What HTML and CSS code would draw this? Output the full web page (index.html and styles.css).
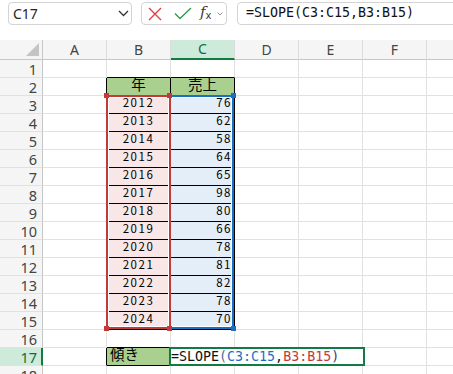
FILE: index.html
```html
<!DOCTYPE html>
<html lang="ja">
<head>
    <meta charset="UTF-8">
    <title>SLOPE</title>
    <link rel="stylesheet" href="styles.css">
</head>
<body>
    <div class="topbar">
        <div class="namebox">
            <span>C17</span>
            <svg class="chev" width="11" height="7" viewBox="0 0 11 7"><polyline points="1,1 5.5,5.5 10,1" fill="none" stroke="#333" stroke-width="1.3"/></svg>
        </div>
        <div class="fxbox">
            <svg class="cancel" width="14" height="14" viewBox="0 0 14 14"><path d="M1 1 L13 13 M13 1 L1 13" stroke="#e0393e" stroke-width="1.3" fill="none"/></svg>
            <svg class="enter" width="18" height="13" viewBox="0 0 18 13"><polyline points="1,6.5 6,11.5 17,1" fill="none" stroke="#2b9a48" stroke-width="1.3"/></svg>
            <span class="fx">f<sub>x</sub></span>
            <svg class="chev-sm" width="6" height="4" viewBox="0 0 6 4"><polyline points="0.5,0.5 3,3 5.5,0.5" fill="none" stroke="#999" stroke-width="1"/></svg>
        </div>
        <div class="formula">=SLOPE(C3:C15,B3:B15)</div>
    </div>

    <div class="sheet-wrap">
        <div class="sheet">
            <div class="c hd corner"><svg width="14" height="14" viewBox="0 0 14 14"><polygon points="13,0 13,13 0,13" fill="#c4c4c4"/></svg></div>
            <div class="c hd">A</div><div class="c hd">B</div><div class="c hd sel">C</div><div class="c hd">D</div><div class="c hd">E</div><div class="c hd">F</div><div class="c hd"></div>

            <div class="c rh">1</div><div class="c"></div><div class="c bb"></div><div class="c bb"></div><div class="c"></div><div class="c"></div><div class="c"></div><div class="c"></div>
            <div class="c rh">2</div><div class="c br"></div><div class="c g bk ctr jp">年</div><div class="c g bk ctr jp">売上</div><div class="c"></div><div class="c"></div><div class="c"></div><div class="c"></div>
            <div class="c rh">3</div><div class="c br"></div><div class="c pk bk ctr">2012</div><div class="c bl bk num">76</div><div class="c"></div><div class="c"></div><div class="c"></div><div class="c"></div>
            <div class="c rh">4</div><div class="c br"></div><div class="c pk bk ctr">2013</div><div class="c bl bk num">62</div><div class="c"></div><div class="c"></div><div class="c"></div><div class="c"></div>
            <div class="c rh">5</div><div class="c br"></div><div class="c pk bk ctr">2014</div><div class="c bl bk num">58</div><div class="c"></div><div class="c"></div><div class="c"></div><div class="c"></div>
            <div class="c rh">6</div><div class="c br"></div><div class="c pk bk ctr">2015</div><div class="c bl bk num">64</div><div class="c"></div><div class="c"></div><div class="c"></div><div class="c"></div>
            <div class="c rh">7</div><div class="c br"></div><div class="c pk bk ctr">2016</div><div class="c bl bk num">65</div><div class="c"></div><div class="c"></div><div class="c"></div><div class="c"></div>
            <div class="c rh">8</div><div class="c br"></div><div class="c pk bk ctr">2017</div><div class="c bl bk num">98</div><div class="c"></div><div class="c"></div><div class="c"></div><div class="c"></div>
            <div class="c rh">9</div><div class="c br"></div><div class="c pk bk ctr">2018</div><div class="c bl bk num">80</div><div class="c"></div><div class="c"></div><div class="c"></div><div class="c"></div>
            <div class="c rh">10</div><div class="c br"></div><div class="c pk bk ctr">2019</div><div class="c bl bk num">66</div><div class="c"></div><div class="c"></div><div class="c"></div><div class="c"></div>
            <div class="c rh">11</div><div class="c br"></div><div class="c pk bk ctr">2020</div><div class="c bl bk num">78</div><div class="c"></div><div class="c"></div><div class="c"></div><div class="c"></div>
            <div class="c rh">12</div><div class="c br"></div><div class="c pk bk ctr">2021</div><div class="c bl bk num">81</div><div class="c"></div><div class="c"></div><div class="c"></div><div class="c"></div>
            <div class="c rh">13</div><div class="c br"></div><div class="c pk bk ctr">2022</div><div class="c bl bk num">82</div><div class="c"></div><div class="c"></div><div class="c"></div><div class="c"></div>
            <div class="c rh">14</div><div class="c br"></div><div class="c pk bk ctr">2023</div><div class="c bl bk num">78</div><div class="c"></div><div class="c"></div><div class="c"></div><div class="c"></div>
            <div class="c rh">15</div><div class="c br"></div><div class="c pk bk ctr">2024</div><div class="c bl bk num">70</div><div class="c"></div><div class="c"></div><div class="c"></div><div class="c"></div>
            <div class="c rh">16</div><div class="c"></div><div class="c bb"></div><div class="c"></div><div class="c"></div><div class="c"></div><div class="c"></div><div class="c"></div>
            <div class="c rh sel">17</div><div class="c br"></div><div class="c g bk jp">傾き</div><div class="c"></div><div class="c"></div><div class="c"></div><div class="c"></div><div class="c"></div>
            <div class="c rh">18</div><div class="c"></div><div class="c"></div><div class="c"></div><div class="c"></div><div class="c"></div><div class="c"></div><div class="c"></div>
        </div>

        <!-- formula reference highlights -->
        <div class="ref ref-b"></div>
        <div class="ref ref-c"></div>
        <span class="handle red h-tl"></span>
        <span class="handle red h-tr"></span>
        <span class="handle red h-bl"></span>
        <span class="handle red h-br"></span>
        <span class="handle blue h-ctr"></span>
        <span class="handle blue h-cbr"></span>

        <!-- in-cell editor -->
        <div class="editor">=SLOPE<span class="paren">(</span><span class="ref-blue">C3:C15</span>,<span class="ref-red">B3:B15</span><span class="paren2">)</span></div>
    </div>
</body>
</html>
```

FILE: styles.css
```css
* {
    box-sizing: border-box;
}

body {
    margin: 0;
    width: 453px;
    height: 374px;
    overflow: hidden;
    background: #fff;
    font-family: "Noto Sans", "Liberation Sans", sans-serif;
}

/* top bar */
.topbar {
    display: flex;
    align-items: flex-start;
    height: 40px;
    padding: 2px 0 0 8px;
}

.namebox {
    flex: none;
    width: 124px;
    height: 23px;
    border: 1px solid #d4d4d4;
    border-radius: 4px;
    display: flex;
    align-items: center;
    justify-content: space-between;
    padding: 0 2px 0 4px;
    font-size: 14px;
    color: #242424;
}

.fxbox {
    flex: none;
    margin-left: 9px;
    width: 86px;
    height: 23px;
    border: 1px solid #d4d4d4;
    border-radius: 4px;
    display: flex;
    align-items: center;
    padding-left: 6px;
}

.enter {
    margin-left: 12px;
}

.fx {
    margin-left: 8px;
    font-family: "DejaVu Serif", serif;
    font-style: italic;
    font-size: 15px;
    color: #3b3b3b;
    line-height: 15px;
}

.fx sub {
    font-size: 10px;
    font-style: normal;
    font-family: "DejaVu Sans", sans-serif;
    vertical-align: -2px;
}

.chev-sm {
    margin-left: 6px;
}

.formula {
    flex: none;
    margin-left: 10px;
    width: 240px;
    height: 23px;
    border: 1px solid #d4d4d4;
    border-radius: 4px;
    padding-left: 8px;
    font-family: "DejaVu Sans Mono", "Liberation Mono", monospace;
    font-size: 13.3px;
    line-height: 19px;
    white-space: nowrap;
    overflow: hidden;
    color: #111;
}

/* grid */
.sheet-wrap {
    position: relative;
}

.sheet {
    display: grid;
    grid-template-columns: 43px repeat(7, 64px);
    grid-template-rows: 20px;
    grid-auto-rows: 18px;
    width: 491px;
}

.c {
    border-right: 1px solid #e1e1e1;
    border-bottom: 1px solid #e1e1e1;
    font-family: "Noto Sans CJK JP", sans-serif;
    font-size: 11.5px;
    letter-spacing: 1.5px;
    line-height: 12.6px;
    padding: 0 3px;
    white-space: nowrap;
    color: #000;
}

.jp {
    font-size: 14.5px;
    letter-spacing: 0;
    line-height: 11.4px;
}

.hd {
    background: #f5f5f5;
    border-right-color: #dcdcdc;
    border-bottom-color: #c6c6c6;
    font-family: "Noto Sans", sans-serif;
    font-size: 14px;
    letter-spacing: 0;
    line-height: 19px;
    text-align: center;
    color: #444;
}

.corner {
    display: flex;
    align-items: flex-end;
    justify-content: flex-end;
    padding: 0 2px 2px 0;
    border-right-color: #c6c6c6;
}

.rh {
    background: #f5f5f5;
    border-right-color: #c6c6c6;
    font-family: "Noto Sans", sans-serif;
    font-size: 14.5px;
    letter-spacing: 0;
    line-height: 16px;
    padding-top: 1px;
    text-align: right;
    padding-right: 5px;
    color: #444;
}

.hd.sel {
    background: #cdeadb;
    color: #0e6e3a;
    border-bottom: 2px solid #107c41;
    line-height: 18px;
}

.rh.sel {
    background: #cdeadb;
    color: #0e6e3a;
    border-right: 2px solid #107c41;
    padding-right: 4px;
}

.g {
    background: #a9d08e;
}

.pk {
    background: #f9e7e7;
}

.bl {
    background: #e4eef8;
}

.bk {
    border-right-color: #000;
    border-bottom-color: #000;
}

.bb {
    border-bottom-color: #000;
}

.br {
    border-right-color: #000;
}

.ctr {
    text-align: center;
}

.num {
    text-align: right;
    padding-right: 2px;
}

/* reference ranges */
.ref {
    position: absolute;
    top: 55px;
    height: 234px;
}

.ref-b {
    left: 106px;
    width: 65px;
    border: 2px solid #c23b3b;
    box-shadow: inset 0 0 0 1px #fff;
}

.ref-c {
    left: 171px;
    width: 63px;
    border: 2px solid #1b6fc2;
    border-left: 0;
    box-shadow: inset 0 1px 0 0 #fff, inset -1px -1px 0 0 #fff;
}

.handle {
    position: absolute;
    width: 5px;
    height: 5px;
}

.handle.red {
    background: #c23b3b;
}

.handle.blue {
    background: #1b6fc2;
}

.h-tl { left: 104px; top: 53px; }
.h-tr { left: 167px; top: 53px; }
.h-bl { left: 104px; top: 286px; }
.h-br { left: 167px; top: 286px; }
.h-ctr { left: 231px; top: 53px; }
.h-cbr { left: 231px; top: 286px; }

/* editor */
.editor {
    position: absolute;
    left: 169px;
    top: 307px;
    width: 196px;
    height: 19px;
    border: 2px solid #107c41;
    background: #fff;
    font-family: "DejaVu Sans Mono", "Liberation Mono", monospace;
    font-size: 13.3px;
    line-height: 15px;
    white-space: nowrap;
    color: #111;
}

.paren {
    color: #4a6a9a;
}

.paren2 {
    color: #3a3a7a;
}

.ref-blue {
    color: #1b6fc2;
}

.ref-red {
    color: #c23b3b;
}
```
